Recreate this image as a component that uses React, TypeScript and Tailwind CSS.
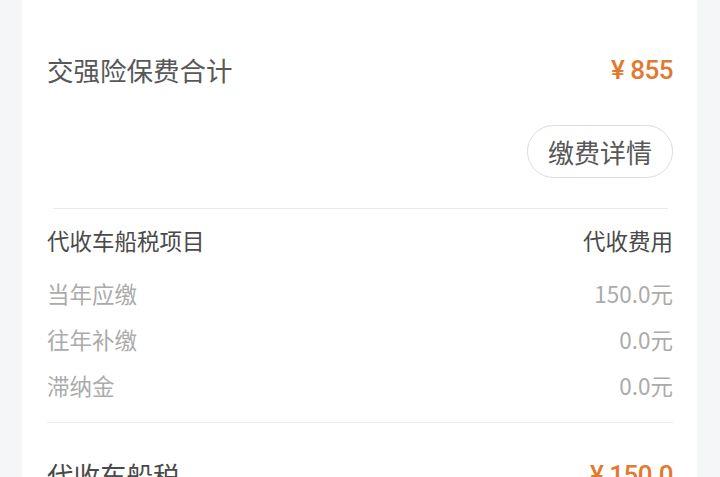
import React from "react";

const cjk = { fontFamily: '"Noto Sans CJK SC", "Noto Sans", sans-serif' };
const num = { fontFamily: 'Roboto, "Noto Sans CJK SC", sans-serif' };

const taxRows = [
  { label: "当年应缴", value: "150.0元" },
  { label: "往年补缴", value: "0.0元" },
  { label: "滞纳金", value: "0.0元" },
];

export default function App() {
  return (
    <div className="w-[720px] h-[477px] overflow-hidden bg-[#f5f6f8]" style={cjk}>
      <div className="ml-[22px] w-[675px] h-full bg-white pl-[25px] pr-[24px]">
        {/* total */}
        <div className="pt-[50px] h-[90px] flex items-center justify-between">
          <span className="text-[26.5px] leading-[40px] text-[#585858]">交强险保费合计</span>
          <span
            className="text-[26px] leading-[40px] font-medium text-[#e3782e] tracking-[-0.5px]"
            style={num}
          >
            ¥ 855
          </span>
        </div>

        <div className="mt-[35px] flex justify-end">
          <button className="h-[53px] px-[20px] rounded-full border border-[#dcdcdc] text-[26px] leading-none text-[#585858]">
            缴费详情
          </button>
        </div>

        <div className="mt-[30px] ml-[6px] mr-[5px] h-px bg-[#ebebeb]" />

        {/* tax table */}
        <div className="mt-[15px] h-[34px] flex items-center justify-between text-[22.5px] text-[#4a4a4a]">
          <span>代收车船税项目</span>
          <span>代收费用</span>
        </div>

        <div className="mt-[19px] flex flex-col gap-[12px]">
          {taxRows.map((r) => (
            <div
              key={r.label}
              className="h-[34px] flex items-center justify-between text-[22.5px] text-[#ababab]"
            >
              <span>{r.label}</span>
              <span>{r.value}</span>
            </div>
          ))}
        </div>

        <div className="mt-[19px] h-px bg-[#ebebeb]" />

        <div className="mt-[32px] h-[40px] flex items-center justify-between">
          <span className="text-[26.5px] leading-[40px] text-[#4a4a4a]">代收车船税</span>
          <span
            className="text-[26px] leading-[40px] font-medium text-[#e3782e] tracking-[-0.5px]"
            style={num}
          >
            ¥ 150.0
          </span>
        </div>
      </div>
    </div>
  );
}
